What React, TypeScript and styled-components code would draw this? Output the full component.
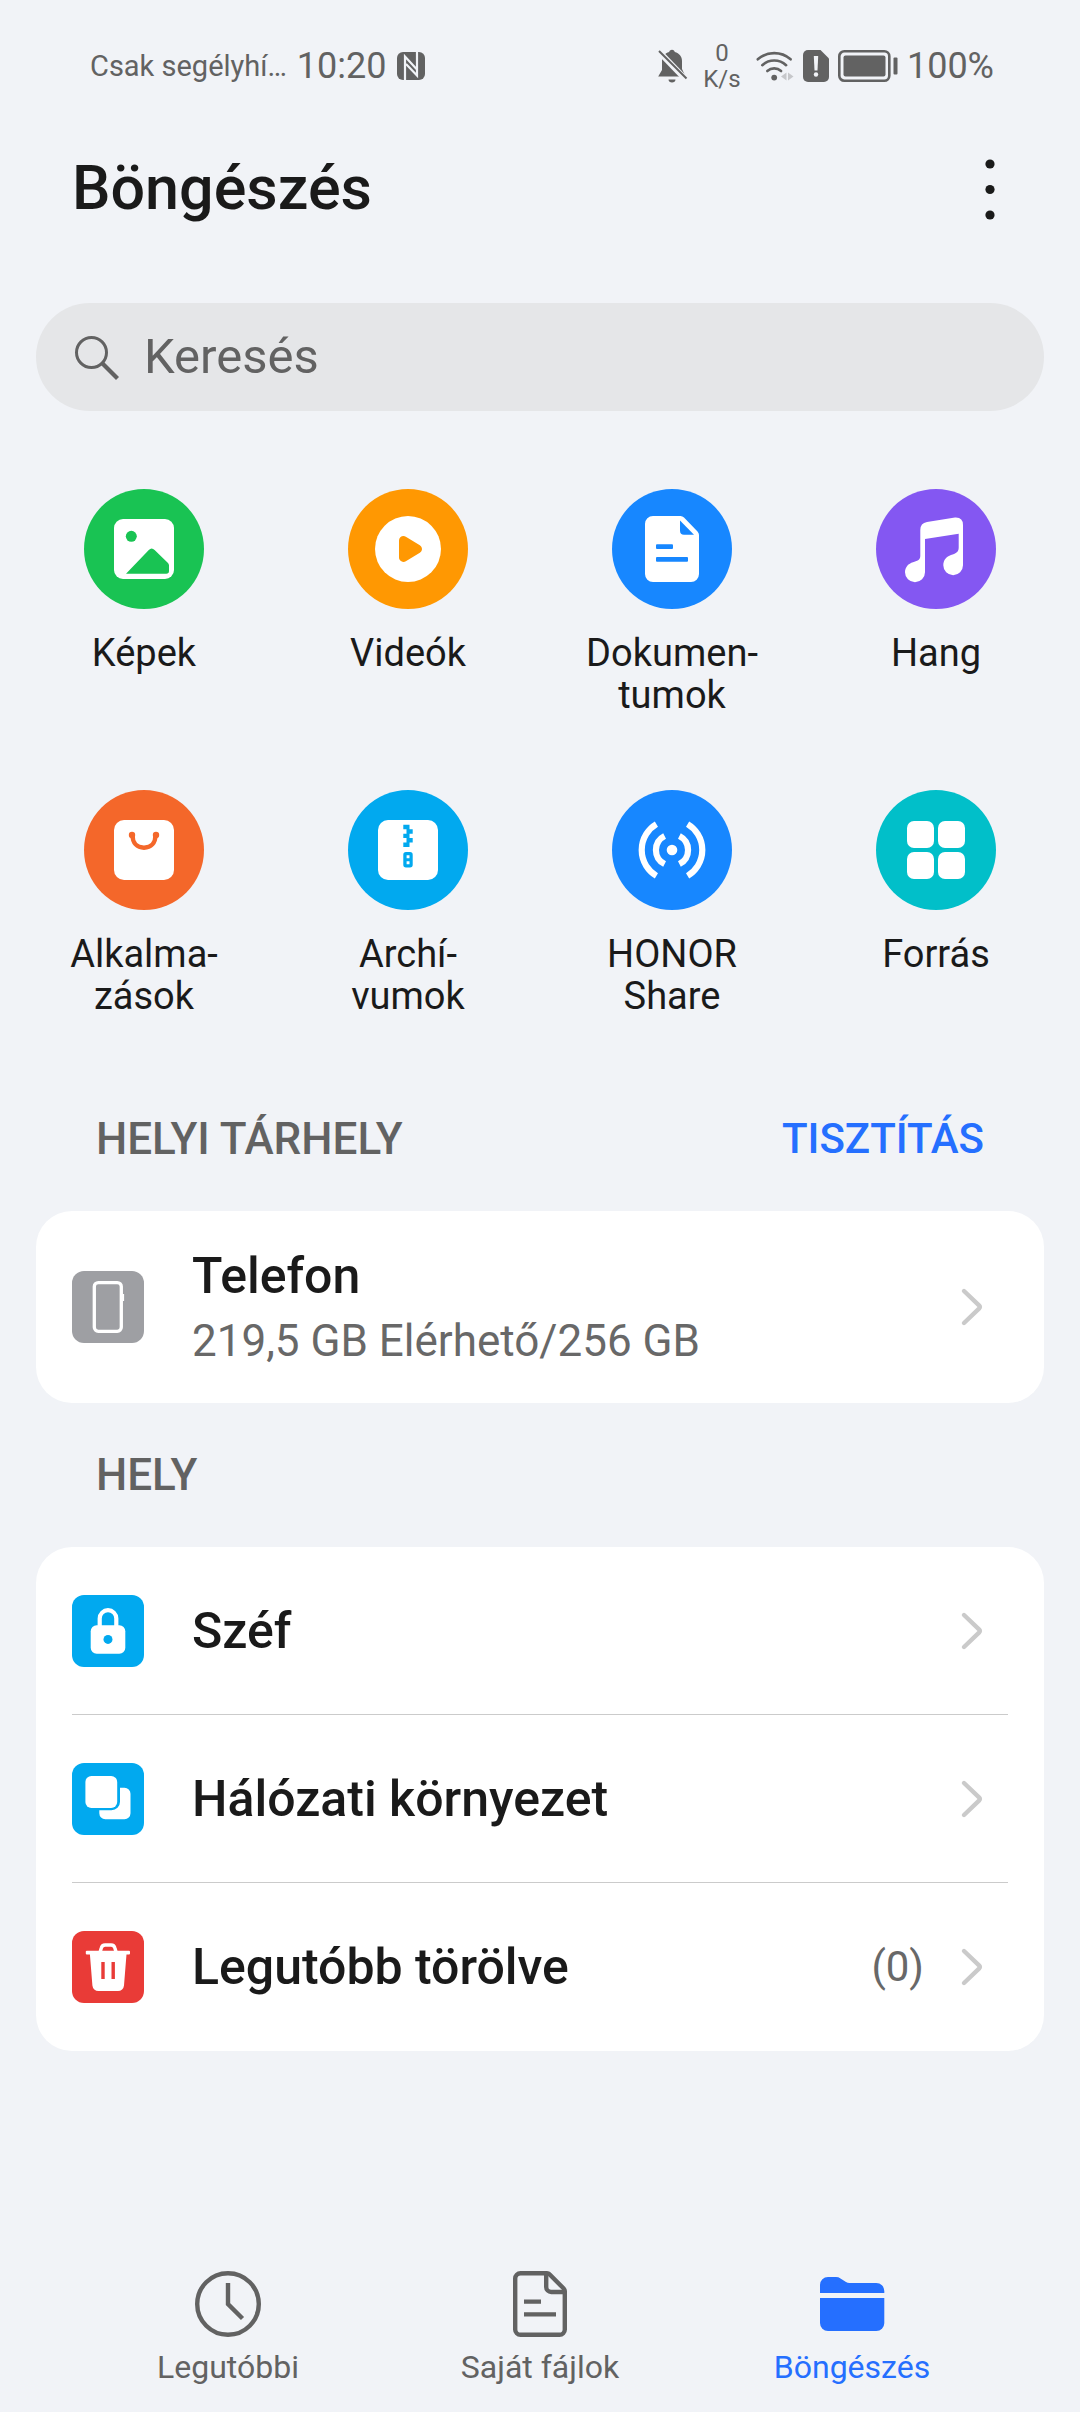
import React from "react";
import styled, { createGlobalStyle } from "styled-components";

const ink = "#1a1a1a";
const grey = "#626262";
const blue = "#256fff";
const page = "#f1f3f7";

const GlobalStyle = createGlobalStyle`
  *, *::before, *::after { box-sizing: border-box; }
  body {
    margin: 0;
    background: ${page};
    color: ${ink};
    font-family: Roboto, "Noto Sans", sans-serif;
  }
  button, input { font: inherit; color: inherit; }
  button { border: 0; padding: 0; background: none; cursor: pointer; }
  svg { display: block; flex: none; }
  h1, h2, ul, p { margin: 0; padding: 0; }
  ul { list-style: none; }
`;

const Screen = styled.div`
  min-height: 100vh;
  display: flex;
  flex-direction: column;
`;

const StatusBar = styled.div`
  display: flex;
  align-items: center;
  justify-content: space-between;
  height: 105px;
  padding: 27px 86px 0 90px;
  color: ${grey};
`;

const StatusGroup = styled.div<{ $gap: number }>`
  display: flex;
  align-items: center;
  gap: ${(p) => p.$gap}px;
`;

const Carrier = styled.span`
  font-size: 29px;
  line-height: 36px;
`;

const StatusText = styled.span`
  font-size: 36px;
  line-height: 42px;
`;

const Speed = styled.span`
  width: 50px;
  font-size: 24px;
  line-height: 26px;
  text-align: center;
`;

const TitleBar = styled.header`
  display: flex;
  align-items: center;
  justify-content: space-between;
  height: 165px;
  padding: 0 54px 0 72px;
`;

const Title = styled.h1`
  font-size: 61px;
  line-height: 72px;
  font-weight: 500;
`;

const IconButton = styled.button`
  width: 72px;
  height: 72px;
  display: grid;
  place-items: center;
`;

const SearchBox = styled.label`
  display: flex;
  align-items: center;
  gap: 24px;
  height: 108px;
  margin: 33px 36px 0;
  padding: 0 36px;
  border-radius: 54px;
  background: #e5e6e8;
  color: ${grey};
`;

const SearchInput = styled.input`
  flex: 1;
  min-width: 0;
  border: 0;
  padding: 0;
  outline: 0;
  background: none;
  font-size: 49px;
  line-height: 60px;
  &::placeholder { color: ${grey}; opacity: 1; }
`;

const Categories = styled.ul`
  display: grid;
  grid-template-columns: repeat(4, 1fr);
  row-gap: 74px;
  margin: 78px 12px 0;
`;

const Category = styled.button`
  width: 100%;
  display: flex;
  flex-direction: column;
  align-items: center;
  gap: 23px;
`;

const CategoryLabel = styled.span`
  min-height: 84px;
  font-size: 38px;
  line-height: 42px;
  white-space: pre-line;
  text-align: center;
`;

const SectionHead = styled.div`
  display: flex;
  align-items: center;
  justify-content: space-between;
  height: 144px;
  padding: 0 96px;
`;

const SectionTitle = styled.h2`
  font-size: 44px;
  line-height: 54px;
  font-weight: 500;
  color: ${grey};
`;

const TextButton = styled.button`
  font-size: 42px;
  line-height: 54px;
  font-weight: 500;
  color: ${blue};
`;

const Storage = styled.section`
  margin-top: 50px;
`;

const Card = styled.ul`
  margin: 0 36px;
  padding: 0 36px;
  border-radius: 36px;
  background: #fff;
`;

const CardItem = styled.li`
  &:not(:last-child) { box-shadow: inset 0 -1px #cbcbcb; }
`;

const Row = styled.button<{ $tall?: boolean }>`
  width: 100%;
  height: ${(p) => (p.$tall ? 192 : 168)}px;
  display: flex;
  align-items: center;
  text-align: left;
  padding-right: 24px;
`;

const RowText = styled.span`
  flex: 1;
  display: flex;
  flex-direction: column;
  gap: 8px;
  margin-left: 48px;
`;

const RowTitle = styled.span`
  font-size: 50px;
  line-height: 60px;
  font-weight: 500;
`;

const RowNote = styled.span`
  font-size: 44px;
  line-height: 54px;
  color: #686868;
`;

const Count = styled.span`
  margin-right: 36px;
  font-size: 42px;
  line-height: 54px;
  color: #686868;
`;

const Tabs = styled.nav`
  display: grid;
  grid-template-columns: repeat(3, 1fr);
  margin-top: auto;
  padding: 48px 72px 24px;
`;

const Tab = styled.a<{ $active?: boolean }>`
  display: flex;
  flex-direction: column;
  align-items: center;
  gap: 9px;
  font-size: 32px;
  line-height: 42px;
  text-decoration: none;
  color: ${(p) => (p.$active ? blue : grey)};
`;

/* ---- status bar glyphs ---- */

const NfcIcon = () => (
  <svg width="28" height="28" viewBox="0 0 28 28" aria-hidden="true">
    <rect width="28" height="28" rx="6" fill={grey} />
    <path d="M8 28V4.5L19.5 17" fill="none" stroke={page} strokeWidth="2.2" />
    <path d="M20 0v23.5L9 12" fill="none" stroke={page} strokeWidth="2.2" />
  </svg>
);

const MutedBellIcon = () => (
  <svg width="30" height="34" viewBox="0 0 30 34" aria-hidden="true">
    <path d="M14 0.8c1.6 0 2.6 1 2.8 2.3 4.4 1.3 7.2 4.4 7.2 9v8l3.6 7.4H0.2L4 21V12c0-4.6 2.8-7.7 7.2-9C11.4 1.8 12.4 0.8 14 0.8z" fill={grey} />
    <path d="M10.5 30.5h7c0 2-1.5 3-3.5 3s-3.5-1-3.5-3z" fill={grey} />
    <path d="M-1 0.6L28.500 31.2" stroke={page} strokeWidth="6" />
    <path d="M1 2L28.5 29.5" stroke={grey} strokeWidth="2" />
  </svg>
);

const WifiIcon = () => (
  <svg width="38" height="32" viewBox="0 0 38 32" fill="none" stroke={grey} strokeWidth="2.6" strokeLinecap="round" aria-hidden="true">
    <path d="M1.8 9.3a25 25 0 0 1 32.8 0" />
    <path d="M6.3 15.2a17.5 17.5 0 0 1 23.8 0" />
    <path d="M11.3 21a10.5 10.5 0 0 1 13.8 0" />
    <circle cx="18.2" cy="27.6" r="2.9" fill={grey} stroke="none" />
    <path d="M30.5 22.5v8l-5.5-4zM32 22.5v8l5.500-4z" fill="#c6c7ca" stroke="none" />
  </svg>
);

const SimAlertIcon = () => (
  <svg width="26" height="32" viewBox="0 0 26 32" aria-hidden="true">
    <path d="M5 0h12.5L26 8.5V27a5 5 0 0 1-5 5H5a5 5 0 0 1-5-5V5a5 5 0 0 1 5-5z" fill={grey} />
    <path d="M10.8 6h4.4l-0.7 14.5h-3z" fill={page} />
    <circle cx="13" cy="24.5" r="2.2" fill={page} />
  </svg>
);

const BatteryIcon = () => (
  <svg width="60" height="32" viewBox="0 0 60 32" aria-hidden="true">
    <rect x="1.3" y="1.3" width="50" height="29.4" rx="5" fill="none" stroke={grey} strokeWidth="2.6" />
    <rect x="5.5" y="5.5" width="42" height="21" rx="2" fill={grey} />
    <rect x="55.5" y="7.5" width="4" height="17" rx="1" fill={grey} />
  </svg>
);

/* ---- toolbar glyphs ---- */

const MoreIcon = () => (
  <svg width="12" height="66" viewBox="0 0 12 66" fill={ink} aria-hidden="true">
    <circle cx="6" cy="9" r="4.6" />
    <circle cx="6" cy="34.5" r="4.6" />
    <circle cx="6" cy="60" r="4.6" />
  </svg>
);

const SearchIcon = () => (
  <svg width="48" height="48" viewBox="0 0 48 48" fill="none" stroke={grey} aria-hidden="true">
    <circle cx="19.5" cy="19.5" r="15" strokeWidth="3" />
    <path d="M30 30l15.5 15.5" strokeWidth="4.2" />
  </svg>
);

const ChevronIcon = () => (
  <svg width="24" height="48" viewBox="0 0 24 48" fill="none" stroke="#cacaca" strokeWidth="4.4" strokeLinecap="round" strokeLinejoin="round" aria-hidden="true">
    <path d="M4 8l15 14.300q1.600 1.700 0 3.400L4 40" />
  </svg>
);

/* ---- category glyphs, each drawn on a 120 unit disc ---- */

const Disc = ({ color, children }: { color: string; children: React.ReactNode }) => (
  <svg width="120" height="120" viewBox="0 0 120 120" aria-hidden="true">
    <circle cx="60" cy="60" r="60" fill={color} />
    {children}
  </svg>
);

const categories: { label: string; color: string; art: React.ReactNode }[] = [
  {
    label: "Képek",
    color: "#19c353",
    art: (
      <>
        <rect x="30" y="30" width="60" height="60" rx="9" fill="#fff" />
        <circle cx="47.3" cy="47.3" r="5.5" fill="#19c353" />
        <path d="M42 84.7L64.8 61Q67.6 58 70.6 61L84 74Q85 75 85 76.5V82Q85 84.7 82.3 84.7Z" fill="#19c353" />
      </>
    ),
  },
  {
    label: "Videók",
    color: "#ff9802",
    art: (
      <>
        <circle cx="60" cy="60" r="33" fill="#fff" />
        <path d="M55.5 51.500L69.500 60L55.500 68.500Z" fill="#ff9802" stroke="#ff9802" strokeWidth="9" strokeLinejoin="round" />
      </>
    ),
  },
  {
    label: "Dokumen-\ntumok",
    color: "#1787ff",
    art: (
      <>
        <path d="M41 27H68.5Q70.5 27 72 28.5L85.5 42.5Q87 44 87 46V85a8 8 0 0 1-8 8H41a8 8 0 0 1-8-8V35a8 8 0 0 1 8-8z" fill="#fff" />
        <path d="M68 31.5L82 45.7H72a4 4 0 0 1-4-4z" fill="#1787ff" />
        <rect x="44" y="55.3" width="17" height="4.7" rx="1" fill="#1787ff" />
        <rect x="44" y="68" width="32" height="4.7" rx="1" fill="#1787ff" />
      </>
    ),
  },
  {
    label: "Hang",
    color: "#8457f2",
    art: (
      <path d="M44.3 41Q44.3 34 51 33L79 28.5Q87 28 87 36V76.3A9.85 9.85 0 1 1 67.3 76.3C67.3 71 70.5 67.5 75 66C79.5 64.5 82.7 63.5 82.7 58.5V44.7L49 50V83.3A10 10 0 1 1 29 83.3C29 78 32.5 74.5 37 73.2C41 72 44.3 71 44.3 67Z" fill="#fff" />
    ),
  },
  {
    label: "Alkalma-\nzások",
    color: "#f4672a",
    art: (
      <>
        <rect x="30" y="30" width="60" height="60" rx="10" fill="#fff" />
        <g fill="#f4672a">
          <circle cx="48" cy="45" r="3.2" />
          <circle cx="72" cy="45" r="3.2" />
        </g>
        <path d="M48.5 45C48.5 53 53 57.7 60 57.7S71.5 53 71.5 45" fill="none" stroke="#f4672a" strokeWidth="4.4" />
      </>
    ),
  },
  {
    label: "Archí-\nvumok",
    color: "#01a9ef",
    art: (
      <>
        <rect x="30" y="30" width="60" height="60" rx="10" fill="#fff" />
        <path d="M55.3 34.7h6.2v4.5h3.2v4.5h-3.2v4.4h3.2v4.5h-3.2v4.4h-6.2v-4.4h3.2v-4.5h-3.2v-4.4h3.2v-4.5h-3.2z" fill="#01a9ef" />
        <path fillRule="evenodd" d="M58 62h4a2.700 2.700 0 0 1 2.700 2.700v10a2.700 2.700 0 0 1-2.700 2.700h-4a2.700 2.700 0 0 1-2.700-2.700v-10a2.700 2.700 0 0 1 2.700-2.700zM58.600 65.200v3h2.900v-3zM58.600 71.200v3h2.900v-3z" fill="#01a9ef" />
      </>
    ),
  },
  {
    label: "HONOR\nShare",
    color: "#1787ff",
    art: (
      <g fill="none" stroke="#fff" strokeWidth="6.2">
        <circle cx="60" cy="60" r="5.3" fill="#fff" stroke="none" />
        <path d="M52.6 45.9a15.8 15.8 0 0 0 0 28.2M67.4 45.9a15.8 15.8 0 0 1 0 28.2" />
        <path d="M44.4 34.2a30 30 0 0 0 0 51.6M75.6 34.2a30 30 0 0 1 0 51.6" />
      </g>
    ),
  },
  {
    label: "Forrás",
    color: "#01bfc9",
    art: (
      <g fill="#fff">
        <rect x="31" y="31" width="27" height="27" rx="7" />
        <rect x="62" y="31" width="27" height="27" rx="7" />
        <rect x="31" y="62" width="27" height="27" rx="7" />
        <rect x="62" y="62" width="27" height="27" rx="7" />
      </g>
    ),
  },
];

/* ---- list glyphs, each drawn on a 72 unit tile ---- */

const Tile = ({ color, children }: { color: string; children: React.ReactNode }) => (
  <svg width="72" height="72" viewBox="0 0 72 72" aria-hidden="true">
    <rect width="72" height="72" rx="12" fill={color} />
    {children}
  </svg>
);

const PhoneTile = () => (
  <Tile color="#9e9fa3">
    <rect x="22.3" y="11.6" width="27" height="48.7" rx="4" fill="none" stroke="#fff" strokeWidth="3.3" />
    <path d="M51.3 23v7" stroke="#fff" strokeWidth="1.6" />
  </Tile>
);

const LockTile = () => (
  <Tile color="#01a9ef">
    <rect x="18.7" y="30.3" width="34.6" height="28.5" rx="6" fill="#fff" />
    <path d="M27.7 32V23.5a8.3 8.3 0 0 1 16.6 0V32" fill="none" stroke="#fff" strokeWidth="4.2" />
    <circle cx="36" cy="44.4" r="4.5" fill="#01a9ef" />
  </Tile>
);

const NetworkTile = () => (
  <Tile color="#01a9ef">
    <rect x="13.4" y="13" width="31.8" height="32" rx="6" fill="#fff" />
    <path d="M48 24.7h4.5a6 6 0 0 1 6 6V50.3a6 6 0 0 1-6 6H33.3a6 6 0 0 1-6-6V47.3H39.500a8.500 8.500 0 0 0 8.500-8.500z" fill="#fff" />
  </Tile>
);

const TrashTile = () => (
  <Tile color="#e93b37">
    <path d="M28 21.500l1.300-4.500a4 4 0 0 1 3.800-3h6a4 4 0 0 1 3.800 3L44.200 21.500" fill="none" stroke="#fff" strokeWidth="3.4" />
    <rect x="13.8" y="19.8" width="44.2" height="3.8" rx="1" fill="#fff" />
    <path d="M17.8 22H54.6L52 54.5a6 6 0 0 1-6 5.500H26.400a6 6 0 0 1-6-5.500z" fill="#fff" />
    <path d="M31 31v17M41.2 31v17" stroke="#e93b37" strokeWidth="3.4" />
  </Tile>
);

/* ---- bottom tab glyphs ---- */

const ClockIcon = () => (
  <svg width="66" height="66" viewBox="0 0 66 66" fill="none" stroke="currentColor" strokeWidth="4.4" aria-hidden="true">
    <circle cx="33" cy="33" r="30.8" />
    <path d="M33 12V33L47.5 47.5" />
  </svg>
);

const FileIcon = () => (
  <svg width="66" height="66" viewBox="0 0 66 66" fill="none" stroke="currentColor" strokeWidth="4.4" aria-hidden="true">
    <path d="M13.5 2.2H40Q41.5 2.2 42.5 3.3L56.7 17.5Q57.8 18.6 57.8 20V58.5a5.3 5.3 0 0 1-5.3 5.3H13.5a5.3 5.3 0 0 1-5.3-5.3V7.5a5.3 5.3 0 0 1 5.3-5.3z" />
    <path d="M39.2 3V16a5 5 0 0 0 5 5H57" />
    <path d="M17 30.6H34M17 43.4H49" />
  </svg>
);

const FolderIcon = () => (
  <svg width="66" height="66" viewBox="0 0 66 66" fill="currentColor" aria-hidden="true">
    <path d="M1 22V14a8 8 0 0 1 8-8H17Q19.5 6 21.5 7.4L27 11Q28.5 12 30.5 12H57.3a8 8 0 0 1 8 8v2z" />
    <path d="M1 27H65.3V52a8 8 0 0 1-8 8H9a8 8 0 0 1-8-8z" />
  </svg>
);

const places = [
  { title: "Széf", icon: <LockTile /> },
  { title: "Hálózati környezet", icon: <NetworkTile /> },
  { title: "Legutóbb törölve", icon: <TrashTile />, count: "(0)" },
];

export default function App() {
  return (
    <Screen>
      <GlobalStyle />
      <StatusBar>
        <StatusGroup $gap={10}>
          <Carrier>Csak segélyhí…</Carrier>
          <StatusText>10:20</StatusText>
          <NfcIcon />
        </StatusGroup>
        <StatusGroup $gap={9}>
          <MutedBellIcon />
          <Speed>0 K/s</Speed>
          <WifiIcon />
          <SimAlertIcon />
          <BatteryIcon />
          <StatusText>100%</StatusText>
        </StatusGroup>
      </StatusBar>

      <TitleBar>
        <Title>Böngészés</Title>
        <IconButton type="button" aria-label="További lehetőségek">
          <MoreIcon />
        </IconButton>
      </TitleBar>

      <SearchBox>
        <SearchIcon />
        <SearchInput type="search" placeholder="Keresés" aria-label="Keresés" />
      </SearchBox>

      <Categories>
        {categories.map((c) => (
          <li key={c.label}>
            <Category type="button">
              <Disc color={c.color}>{c.art}</Disc>
              <CategoryLabel>{c.label}</CategoryLabel>
            </Category>
          </li>
        ))}
      </Categories>

      <Storage>
        <SectionHead>
          <SectionTitle>HELYI TÁRHELY</SectionTitle>
          <TextButton type="button">TISZTÍTÁS</TextButton>
        </SectionHead>
        <Card>
          <CardItem>
            <Row type="button" $tall>
              <PhoneTile />
              <RowText>
                <RowTitle>Telefon</RowTitle>
                <RowNote>219,5 GB Elérhető/256 GB</RowNote>
              </RowText>
              <ChevronIcon />
            </Row>
          </CardItem>
        </Card>
      </Storage>

      <section>
        <SectionHead>
          <SectionTitle>HELY</SectionTitle>
        </SectionHead>
        <Card>
          {places.map((p) => (
            <CardItem key={p.title}>
              <Row type="button">
                {p.icon}
                <RowText>
                  <RowTitle>{p.title}</RowTitle>
                </RowText>
                {p.count && <Count>{p.count}</Count>}
                <ChevronIcon />
              </Row>
            </CardItem>
          ))}
        </Card>
      </section>

      <Tabs>
        <Tab href="#recent">
          <ClockIcon />
          Legutóbbi
        </Tab>
        <Tab href="#files">
          <FileIcon />
          Saját fájlok
        </Tab>
        <Tab href="#browse" $active aria-current="page">
          <FolderIcon />
          Böngészés
        </Tab>
      </Tabs>
    </Screen>
  );
}
